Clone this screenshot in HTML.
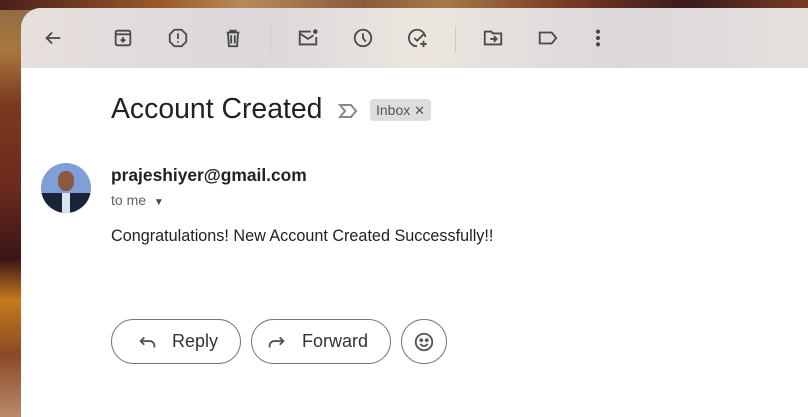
<!DOCTYPE html>
<html><head><meta charset="utf-8"><style>
*{margin:0;padding:0;box-sizing:border-box}
html,body{width:808px;height:417px;overflow:hidden}
body{position:relative;font-family:"Liberation Sans",Arial,sans-serif;
background:linear-gradient(180deg,#8a6a45 0%,#a8773c 12%,#7a3a20 25%,#6b2a1c 45%,#3a1418 62%,#c47a1c 72%,#8a4a25 85%,#b88a6a 100%);}
.topbar{position:absolute;left:0;top:0;width:808px;height:10px;background:linear-gradient(90deg,#4a1e1a,#9a5a2a 20%,#b88a5a 30%,#8a5a3a 45%,#a57a45 55%,#7a3a25 70%,#3a1a1c 85%,#7a3a22)}
.panel{position:absolute;left:21px;top:8px;width:800px;height:420px;background:#fff;border-top-left-radius:20px;overflow:hidden}
.tb{height:60px;background:linear-gradient(90deg,#e6dfdc,#dcd7db 30%,#ece6df 50%,#dcd7db 75%,#e6e0dc);position:relative}
.tb svg{position:absolute;top:19px;width:22px;height:22px;fill:none;stroke:#4a4a4a;stroke-width:2}
.sep{position:absolute;top:18px;width:1px;height:26px;background:#cfc8c4}
h1{position:absolute;left:90px;top:85px;font-weight:400;font-size:28.4px;color:#222}
.lbl{position:absolute;left:349px;top:91px;background:#ddd;border-radius:4px;padding:2px 6px;font-size:14px;color:#555;height:22px;line-height:18px}
.av{position:absolute;left:20px;top:155px;width:50px;height:50px;border-radius:50%;background:linear-gradient(180deg,#7f9fd8 0 60%,#1a2438 60%);overflow:hidden}
.from{position:absolute;left:90px;top:157px;font-weight:700;font-size:17.4px;color:#222}
.to{position:absolute;left:90px;top:184px;font-size:14px;color:#5f6368}
.body{position:absolute;left:90px;top:219px;font-size:16.2px;color:#222}
.btn{position:absolute;top:311px;height:45px;border:1px solid #747775;border-radius:23px;font-size:18px;color:#333;display:flex;align-items:center}
.btn svg{width:22px;height:22px;fill:none;stroke:#555;stroke-width:2}
</style></head><body>
<div class="topbar"></div>
<div class="panel">
<div class="tb">
<svg style="left:21px" viewBox="0 0 24 24"><path d="M20 12H5M11 6l-6 6 6 6"/></svg>
<svg style="left:91px" viewBox="0 0 24 24"><rect x="4" y="4" width="16" height="16" rx="2"/><path d="M4 8h16M12 11v5M9.5 13.5l2.5 2.5 2.5-2.5"/></svg>
<svg style="left:146px" viewBox="0 0 24 24"><path d="M8 3h8l5 5v8l-5 5H8l-5-5V8z"/><path d="M12 7v6M12 15.5v1.5"/></svg>
<svg style="left:201px" viewBox="0 0 24 24"><path d="M5 6h14M9 6V4h6v2M6.5 6l1 15h9l1-15M10 9v9M14 9v9"/></svg>
<div class="sep" style="left:249px"></div>
<svg style="left:276px" viewBox="0 0 24 24"><path d="M15 5H3v14h18v-8M3 7l9 6 6-4"/><circle cx="20" cy="5" r="2.5" fill="#4a4a4a" stroke="none"/></svg>
<svg style="left:331px" viewBox="0 0 24 24"><circle cx="12" cy="12" r="9"/><path d="M12 7v5l3 4"/></svg>
<svg style="left:386px" viewBox="0 0 24 24"><path d="M20 11a9 9 0 1 0-9 10"/><path d="M8 12l3 3 8-8M18 15v7M14.5 18.5h7"/></svg>
<div class="sep" style="left:434px"></div>
<svg style="left:461px" viewBox="0 0 24 24"><path d="M3 5h7l2 2h9v12H3z"/><path d="M9 13h7M13 10l3 3-3 3"/></svg>
<svg style="left:516px" viewBox="0 0 24 24"><path d="M3 6h13l5 6-5 6H3z"/></svg>
<svg style="left:566px" viewBox="0 0 24 24"><circle cx="12" cy="5" r="1.3" fill="#4a4a4a"/><circle cx="12" cy="12" r="1.3" fill="#4a4a4a"/><circle cx="12" cy="19" r="1.3" fill="#4a4a4a"/></svg>
</div>
<h1>Account Created</h1>
<svg style="position:absolute;left:317px;top:94px" width="20" height="18" viewBox="0 0 20 18" fill="none" stroke="#888" stroke-width="2"><path d="M2 3h11l5 6-5 6H2l5-6z"/></svg>
<div class="lbl">Inbox <span style="font-size:13px">&#x2715;</span></div>
<div class="av"><div style="position:absolute;left:17px;top:8px;width:16px;height:20px;border-radius:45%;background:#8a5a3e"></div><div style="position:absolute;left:21px;top:30px;width:8px;height:20px;background:#d8e4f0"></div></div>
<div class="from">prajeshiyer@gmail.com</div>
<div class="to">to me <span style="font-size:10px;color:#444;margin-left:4px">&#9660;</span></div>
<div class="body">Congratulations! New Account Created Successfully!!</div>
<div class="btn" style="left:90px;width:130px;padding-left:24px"><svg viewBox="0 0 24 24"><path d="M20 18v-2a5 5 0 0 0-5-5H5M9 7l-4 4 4 4"/></svg><span style="margin-left:14px">Reply</span></div>
<div class="btn" style="left:230px;width:140px;padding-left:14px"><svg viewBox="0 0 24 24"><path d="M4 18v-2a5 5 0 0 1 5-5h10M15 7l4 4-4 4"/></svg><span style="margin-left:14px">Forward</span></div>
<div class="btn" style="left:380px;width:46px;justify-content:center"><svg viewBox="0 0 24 24"><circle cx="12" cy="12" r="9"/><circle cx="9" cy="10" r="1" fill="#555"/><circle cx="15" cy="10" r="1" fill="#555"/><path d="M8 14c2 3 6 3 8 0"/></svg></div>
</div>
</body></html>
